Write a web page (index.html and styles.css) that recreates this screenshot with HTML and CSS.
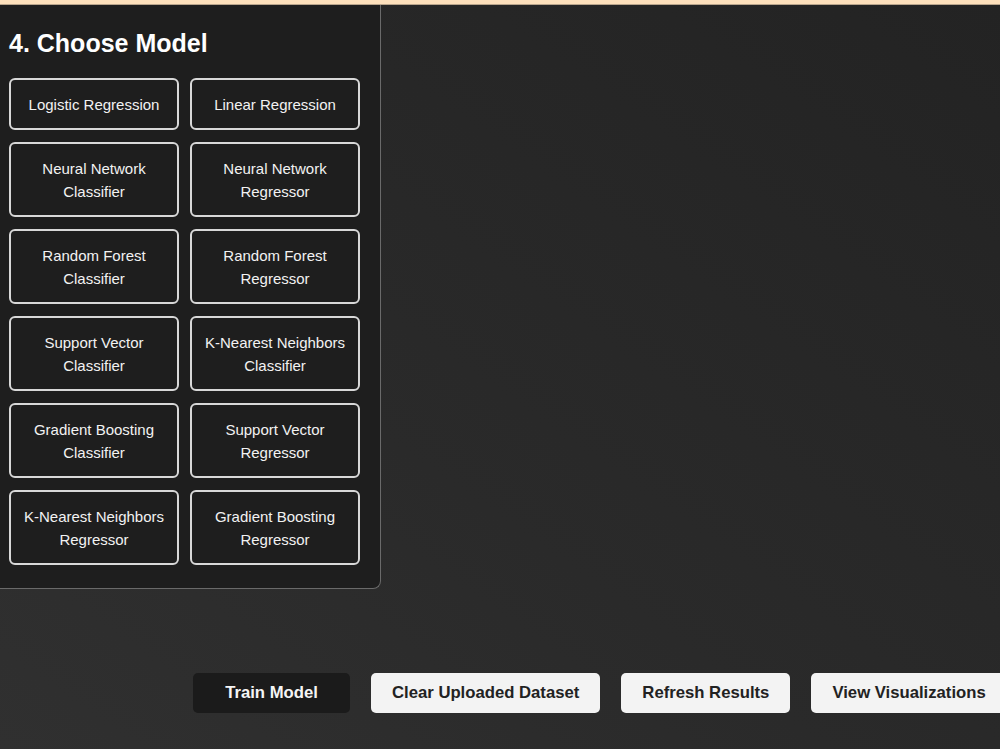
FILE: index.html
```html
<!DOCTYPE html>
<html lang="en">
<head>
    <meta charset="UTF-8">
    <meta name="viewport" content="width=device-width, initial-scale=1.0">
    <title>Model Trainer</title>
    <link rel="stylesheet" href="styles.css">
</head>
<body>
    <div class="top-strip"></div>

    <div class="main">
        <div class="panel" id="modelPanel">
            <h2>4. Choose Model</h2>
            <div class="model-grid">
                <button class="model-btn">Logistic Regression</button>
                <button class="model-btn">Linear Regression</button>
                <button class="model-btn">Neural Network<br>Classifier</button>
                <button class="model-btn">Neural Network<br>Regressor</button>
                <button class="model-btn">Random Forest<br>Classifier</button>
                <button class="model-btn">Random Forest<br>Regressor</button>
                <button class="model-btn">Support Vector<br>Classifier</button>
                <button class="model-btn">K-Nearest Neighbors<br>Classifier</button>
                <button class="model-btn">Gradient Boosting<br>Classifier</button>
                <button class="model-btn">Support Vector<br>Regressor</button>
                <button class="model-btn">K-Nearest Neighbors<br>Regressor</button>
                <button class="model-btn">Gradient Boosting<br>Regressor</button>
            </div>
        </div>
    </div>

    <div class="actions">
        <button class="action-btn train">Train Model</button>
        <button class="action-btn">Clear Uploaded Dataset</button>
        <button class="action-btn">Refresh Results</button>
        <button class="action-btn">View Visualizations</button>
    </div>
</body>
</html>
```

FILE: styles.css
```css
html, body {
    margin: 0;
    padding: 0;
    height: 100%;
}
body {
    font-family: "Liberation Sans", Arial, sans-serif;
    color: white;
    background: linear-gradient(35deg, #303030 0%, #2a2a2a 40%, #232323 100%);
    overflow: hidden;
    width: 1000px;
    height: 749px;
}
.top-strip {
    height: 4px;
    background-color: #fde0bc;
    border-bottom: 1px solid #b9a58c;
}
.main {
    display: flex;
    height: 584px;
}
.panel {
    box-sizing: border-box;
    width: 381px;
    background-color: #1e1e1e;
    border-right: 1px solid #6a6a6a;
    border-bottom: 1px solid #6a6a6a;
    border-bottom-right-radius: 8px;
    padding: 23px 20px 21px 9px;
}
.panel h2 {
    margin: 0 0 20px 0;
    font-size: 25px;
    line-height: 30px;
    font-weight: bold;
}
.model-grid {
    display: grid;
    grid-template-columns: 170px 170px;
    column-gap: 11px;
    row-gap: 12px;
}
.model-btn {
    background-color: #1e1e1e;
    color: #f2f2f2;
    border: 2px solid #d8d8d8;
    border-radius: 6px;
    font-family: "Liberation Sans", Arial, sans-serif;
    font-size: 15px;
    line-height: 23px;
    padding: 12.5px 4px;
    text-align: center;
    cursor: pointer;
}
.actions {
    display: flex;
    gap: 21px;
    margin: 84px 0 0 193px;
}
.action-btn {
    flex-shrink: 0;
    height: 40px;
    padding: 0 21px;
    border: none;
    border-radius: 5px;
    background-color: #f3f3f3;
    color: #222;
    font-family: "Liberation Sans", Arial, sans-serif;
    font-size: 16.7px;
    font-weight: bold;
    cursor: pointer;
}
.action-btn.train {
    min-width: 157px;
    background-color: #1b1b1b;
    color: #f5f5f5;
}
```
